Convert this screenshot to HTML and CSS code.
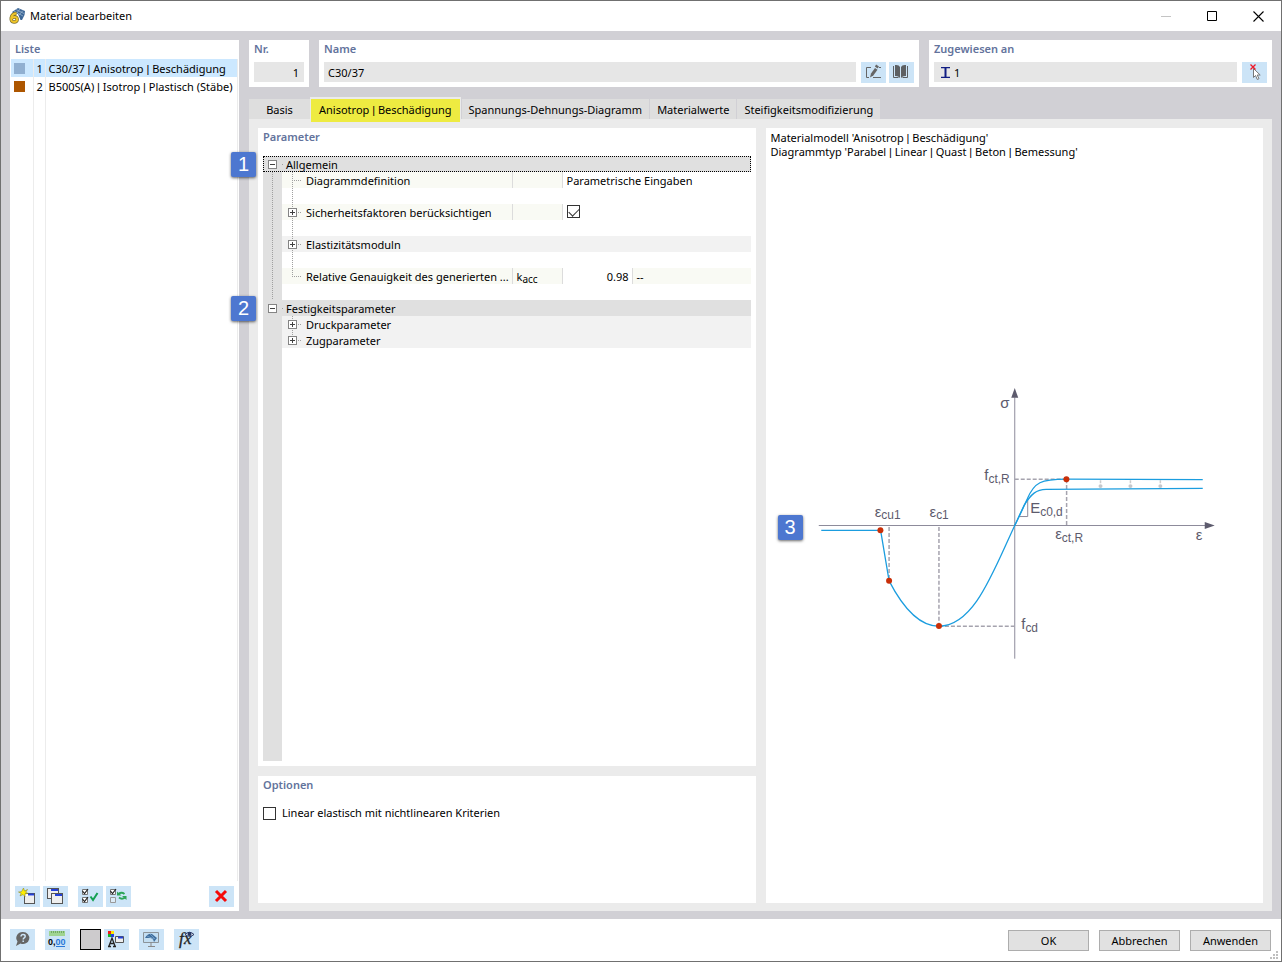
FILE: index.html
```html
<!DOCTYPE html>
<html lang="de">

<head>
    <meta charset="UTF-8">
    <meta name="viewport" content="width=device-width, initial-scale=1.0">
    <title>Material bearbeiten</title>
    <link rel="stylesheet" href="styles.css">
</head>

<body>
    <div class="window">
        <header class="titlebar">
            <svg class="logo" width="16" height="16" viewBox="0 0 16 16">
                <path d="M3 4 L9 0 L16 3 L15.500 7 L13 12 L11.500 12 L9 6 L5 6Z" fill="#3d6797" />
                <path d="M5 3l9 5M7 1.500l8 4M11 1l-4 5M14 2.500l-4 4.500" stroke="#a3bdd6" stroke-width=".7" />
                <path d="M7.500 5.500 Q3 5.500 2.200 10 Q1.800 14 5 14 Q8.200 14 8.200 11.300 Q8 8.800 5.200 9 Q3 9.300 2.500 11" fill="none" stroke="#7d702d" stroke-width="3.400" />
                <path d="M7.500 5.500 Q3 5.500 2.200 10 Q1.800 14 5 14 Q8.200 14 8.200 11.300 Q8 8.800 5.200 9 Q3 9.300 2.500 11" fill="none" stroke="#efc529" stroke-width="2" />
            </svg>
            <h1>Material bearbeiten</h1>
            <div class="window-controls">
                <button aria-label="Minimieren" disabled><svg width="10" height="10"><path d="M0 5.500h10" stroke="#c4c4c4" /></svg></button>
                <button aria-label="Maximieren"><svg width="10" height="10"><path d="M.5.5h9v9h-9z" fill="none" stroke="#000" /></svg></button>
                <button aria-label="Schließen"><svg width="11" height="11"><path d="M.5.500l10 10M10.500.500l-10 10" stroke="#000" stroke-width="1.100" /></svg></button>
            </div>
        </header>

        <main class="workspace">
            <aside class="panel list-panel">
                <h2>Liste</h2>
                <div class="list">
                    <table class="materials">
                        <tr class="selected">
                            <td><span class="swatch concrete"></span></td>
                            <td>1</td>
                            <td>C30/37 <span class="sep">|</span> Anisotrop <span class="sep">|</span> Beschädigung</td>
                        </tr>
                        <tr>
                            <td><span class="swatch steel"></span></td>
                            <td>2</td>
                            <td>B500S(A) <span class="sep">|</span> Isotrop <span class="sep">|</span> Plastisch (Stäbe)</td>
                        </tr>
                        <tr class="filler">
                            <td></td>
                            <td></td>
                            <td></td>
                        </tr>
                    </table>
                </div>
                <div class="toolbar list-tools">
                    <button class="icon-btn" aria-label="Neu">
                        <svg width="25" height="21" viewBox="0 0 25 21">
                            <rect x="9.500" y="7.500" width="10" height="10" fill="#eee" stroke="#555" />
                            <path d="M10 9h9" stroke="#fff" stroke-width="2" /><path d="M13 8.500h6" stroke="#2340d8" stroke-width="2" />
                            <path d="M8.500 2l1 3 3-1.500-1.800 2.700 2.300 1.300-3 .3 0 2.700-2-2-3 1.500 1.200-2.700-2.700-1.300 3-.3z" fill="#ffef00" stroke="#8f8b28" stroke-width=".6" />
                        </svg>
                    </button>
                    <button class="icon-btn" aria-label="Kopieren">
                        <svg width="25" height="21" viewBox="0 0 25 21">
                            <rect x="4.500" y="2.500" width="11" height="10" fill="#eee" stroke="#555" />
                            <path d="M8 4h7" stroke="#2340d8" stroke-width="2" />
                            <rect x="8.500" y="7.500" width="11" height="10" fill="#eee" stroke="#555" />
                            <path d="M12 9h7" stroke="#2340d8" stroke-width="2" />
                        </svg>
                    </button>
                    <button class="icon-btn group-start" aria-label="Alle auswählen">
                        <svg width="25" height="21" viewBox="0 0 25 21" fill="none">
                            <path d="M4.500 3.500h5v5h-5zM4.500 11.500h5v5h-5z" fill="#fff" stroke="#777" />
                            <path d="M4.500 5l2 2.500 3.500-4.500M4.500 13l2 2.500 3.500-4.500" stroke="#222" stroke-width="1.200" />
                            <path d="M12.500 10.500l2.500 3.500 4.500-7" stroke="#14a052" stroke-width="2" />
                        </svg>
                    </button>
                    <button class="icon-btn" aria-label="Auswahl umkehren">
                        <svg width="25" height="21" viewBox="0 0 25 21" fill="none">
                            <path d="M4.500 3.500h5v5h-5z" fill="#fff" stroke="#777" />
                            <path d="M4.500 11.500h5v5h-5z" fill="#dcebf6" stroke="#999" />
                            <path d="M4.500 5l2 2.500 3.500-4.500" stroke="#222" stroke-width="1.200" />
                            <path d="M12.500 8q3-2.500 6 0M19 11.500q-3 2.500-6 0" stroke="#2ca457" stroke-width="1.800" />
                            <path d="M11 5.500v4h4.500zM20.500 14v-4H16z" fill="#2ca457" />
                        </svg>
                    </button>
                    <button class="icon-btn push-right" aria-label="Löschen">
                        <svg width="25" height="21" viewBox="0 0 25 21">
                            <path d="M7 5l10 10M17 5l-10 10" stroke="#f50a0a" stroke-width="3" />
                        </svg>
                    </button>
                </div>
            </aside>

            <div class="editor">
                <div class="fields">
                    <div class="panel field-nr">
                        <label for="nr">Nr.</label>
                        <div class="field-row"><input id="nr" type="text" value="1" readonly></div>
                    </div>
                    <div class="panel field-name">
                        <label for="name">Name</label>
                        <div class="field-row">
                            <input id="name" type="text" value="C30/37" readonly>
                            <div class="toolbar">
                                <button class="icon-btn" aria-label="Name bearbeiten">
                                    <svg width="25" height="21" viewBox="0 0 25 21">
                                        <path d="M10 5.500H5.500v10H8M12 15.500h8M18 5.500h2" fill="none" stroke="#666" />
                                        <path d="M9 15.500l1-4 4-5.500 2.500 1.800-4.200 5.700z" fill="#666" /><path d="M14.500 3.500l2.800 2" stroke="#666" stroke-width="2.200" />
                                    </svg>
                                </button>
                                <button class="icon-btn" aria-label="Bibliothek">
                                    <svg width="25" height="21" viewBox="0 0 25 21">
                                        <path d="M6 3q4-.5 5 2v11q-2-2.500-5-2zM17 3q-4-.5-5 2v11q2-2.500 5-2z" fill="#5d6063" />
                                        <path d="M4.500 4v11.500h5M18.500 4v11.500h-5" fill="none" stroke="#5d6063" />
                                    </svg>
                                </button>
                            </div>
                        </div>
                    </div>
                    <div class="panel field-assigned">
                        <label for="assigned">Zugewiesen an</label>
                        <div class="field-row">
                            <div class="input-wrap">
                                <svg width="9" height="11" viewBox="0 0 9 11"><path d="M0 .5h9M0 10.500h9" stroke="#111d83" stroke-width="1.400" /><path d="M4.500 0v11" stroke="#111d83" stroke-width="2" /></svg>
                                <input id="assigned" type="text" value="1" readonly>
                            </div>
                            <button class="icon-btn" aria-label="Auswahl aufheben">
                                <svg width="25" height="21" viewBox="0 0 25 21">
                                    <path d="M11.500 6.500v9l2-2 1.800 4 1.700-.8-1.800-3.700h3z" fill="#fff" stroke="#777" />
                                    <path d="M8.500 2.500l5 5M13.500 2.500l-5 5" stroke="#f01828" stroke-width="1.300" />
                                </svg>
                            </button>
                        </div>
                    </div>
                </div>

                <nav class="tabs">
                    <button class="tab first">Basis</button>
                    <button class="tab active"><span class="tab-label">Anisotrop <span class="sep">|</span> Beschädigung</span></button>
                    <button class="tab">Spannungs-Dehnungs-Diagramm</button>
                    <button class="tab">Materialwerte</button>
                    <button class="tab">Steifigkeitsmodifizierung</button>
                </nav>

                <div class="tab-page">
                    <section class="panel parameters">
                        <h2>Parameter</h2>
                        <div class="tree">
                            <table class="params">
                                <colgroup>
                                    <col class="col-gutter">
                                    <col class="col-branch">
                                    <col class="col-name">
                                    <col class="col-symbol">
                                    <col class="col-value">
                                    <col class="col-unit">
                                </colgroup>
                                <tr class="group focused">
                                    <td class="gutter"><button class="toggle minus" aria-label="Allgemein"></button><span class="marker">1</span></td>
                                    <td colspan="5">Allgemein</td>
                                </tr>
                                <tr class="item">
                                    <td class="gutter line"></td>
                                    <td class="branch leaf"></td>
                                    <td>Diagrammdefinition</td>
                                    <td></td>
                                    <td class="value" colspan="2">Parametrische Eingaben</td>
                                </tr>
                                <tr>
                                    <td class="gutter line"></td>
                                    <td class="branch"></td>
                                    <td colspan="4"></td>
                                </tr>
                                <tr class="item">
                                    <td class="gutter line"></td>
                                    <td class="branch leaf"><button class="toggle plus" aria-label="Sicherheitsfaktoren"></button></td>
                                    <td><label for="safety">Sicherheitsfaktoren berücksichtigen</label></td>
                                    <td></td>
                                    <td class="value check" colspan="2"><input id="safety" type="checkbox" checked></td>
                                </tr>
                                <tr>
                                    <td class="gutter line"></td>
                                    <td class="branch"></td>
                                    <td colspan="4"></td>
                                </tr>
                                <tr class="subgroup">
                                    <td class="gutter line"></td>
                                    <td class="branch leaf"><button class="toggle plus" aria-label="Elastizitätsmoduln"></button></td>
                                    <td colspan="4">Elastizitätsmoduln</td>
                                </tr>
                                <tr>
                                    <td class="gutter line"></td>
                                    <td class="branch"></td>
                                    <td colspan="4"></td>
                                </tr>
                                <tr class="item">
                                    <td class="gutter line"></td>
                                    <td class="branch leaf last"></td>
                                    <td>Relative Genauigkeit des generierten ...</td>
                                    <td>k<sub>acc</sub></td>
                                    <td class="value number">0.98</td>
                                    <td>--</td>
                                </tr>
                                <tr>
                                    <td class="gutter line"></td>
                                    <td colspan="5"></td>
                                </tr>
                                <tr class="group">
                                    <td class="gutter"><button class="toggle minus" aria-label="Festigkeitsparameter"></button><span class="marker">2</span></td>
                                    <td colspan="5">Festigkeitsparameter</td>
                                </tr>
                                <tr class="subgroup">
                                    <td class="gutter"></td>
                                    <td class="branch leaf"><button class="toggle plus" aria-label="Druckparameter"></button></td>
                                    <td colspan="4">Druckparameter</td>
                                </tr>
                                <tr class="subgroup">
                                    <td class="gutter"></td>
                                    <td class="branch leaf last"><button class="toggle plus" aria-label="Zugparameter"></button></td>
                                    <td colspan="4">Zugparameter</td>
                                </tr>
                            </table>
                        </div>
                    </section>

                    <section class="panel options">
                        <h2>Optionen</h2>
                        <label class="option"><input type="checkbox"> Linear elastisch mit nichtlinearen Kriterien</label>
                    </section>

                    <section class="panel preview">
                        <p>Materialmodell 'Anisotrop <span class="sep">|</span> Beschädigung'<br>Diagrammtyp 'Parabel <span class="sep">|</span> Linear <span class="sep">|</span> Quast <span class="sep">|</span> Beton <span class="sep">|</span> Bemessung'</p>
                        <div class="diagram">
                            <span class="marker">3</span>
                            <svg viewBox="766 157 497 746">
                                <!-- axes -->
                                <g stroke="#8d8b9b" fill="none">
                                    <path d="M818 524.500h388M1014.500 658V396" />
                                    <path d="M1019 515.500h8.500v-18" />
                                </g>
                                <path d="M1014.500 386.500l3.500 10h-7zM1215 524.500l-10-3.500v7z" fill="#5d5b6d" />
                                <!-- helper lines -->
                                <g stroke="#a5a3ae" fill="none" stroke-width="1.500" stroke-dasharray="4 2">
                                    <path d="M888.500 526v53M938.500 526v99M938.500 625.500h76M1014.500 478h52M1066.500 478v46" />
                                </g>
                                <g stroke="#ccc" stroke-width="1.500" stroke-dasharray="3 2">
                                    <path d="M1100.500 479v7M1130.500 479v7M1160.500 479v7" />
                                </g>
                                <g fill="#c6c8cc">
                                    <circle cx="1100.500" cy="485" r="2" />
                                    <circle cx="1130.500" cy="485" r="2" />
                                    <circle cx="1160.500" cy="485" r="2" />
                                </g>
                                <!-- curves -->
                                <g stroke="#1b9ddf" fill="none" stroke-width="1.300">
                                    <path d="M820.500 529.300H880L888.500 580Q912 625.500 938.500 625.500C974 625.500 993 570 1014.500 524.500C1021 511 1023 507 1027 498C1034 481 1041 478 1066 478L1203 478.500" />
                                    <path d="M1014.500 524.500L1024 504C1031 493 1036 488.300 1046 488.300L1203 487.300" />
                                </g>
                                <g fill="#c92f08">
                                    <circle cx="879.800" cy="529.300" r="3" />
                                    <circle cx="888.500" cy="579.800" r="3" />
                                    <circle cx="938.500" cy="625.300" r="3" />
                                    <circle cx="1066.300" cy="478" r="3" />
                                </g>
                                <g class="labels">
                                    <text x="1000" y="407">σ</text>
                                    <text x="984" y="479">f<tspan class="idx" dy="3">ct,R</tspan></text>
                                    <text x="1030" y="512">E<tspan class="idx" dy="3">c0,d</tspan></text>
                                    <text x="1055" y="538">ε<tspan class="idx" dy="3">ct,R</tspan></text>
                                    <text x="1196" y="539">ε</text>
                                    <text x="874" y="516">ε<tspan class="idx" dy="2">cu1</tspan></text>
                                    <text x="929" y="516">ε<tspan class="idx" dy="2">c1</tspan></text>
                                    <text x="1021" y="628">f<tspan class="idx" dy="3">cd</tspan></text>
                                </g>
                            </svg>
                        </div>
                    </section>
                </div>
            </div>
        </main>

        <footer class="footer">
            <div class="toolbar footer-tools">
                <button class="icon-btn" aria-label="Hilfe">
                    <svg width="25" height="21" viewBox="0 0 25 21">
                        <path d="M13 3a6.300 6 0 1 1-2.500 11.500L6 17l1.500-4.500A6.300 6 0 0 1 13 3z" fill="#666" />
                        <path d="M11 7.500q.2-2 2-2 2.200 0 2.200 1.700 0 1-1 1.600-1 .6-1 1.700M13.200 11.500v1.500" fill="none" stroke="#cce4f7" stroke-width="1.500" />
                    </svg>
                </button>
                <button class="icon-btn" aria-label="Einheiten">
                    <svg width="25" height="21" viewBox="0 0 25 21">
                        <path d="M4 2h16v5H4z" fill="#9fd492" /><path d="M6.500 2v2M8.500 2v2M10.500 2v2M12.500 2v2M14.500 2v2M16.500 2v2M18.500 2v2" stroke="#72aa65" />
                        <text class="units" x="3" y="16">0,<tspan fill="#2878d8">00</tspan></text>
                        <path d="M11 17.500h9" stroke="#2878d8" />
                    </svg>
                </button>
                <button class="color-btn" aria-label="Farbe"></button>
                <button class="icon-btn tight" aria-label="Darstellung">
                    <svg width="25" height="21" viewBox="0 0 25 21">
                        <path d="M4 2h3v3H4z" fill="#f01818" /><path d="M7 2h3v3H7z" fill="#ffe800" />
                        <path d="M4 5h3v3H4z" fill="#12b42a" /><path d="M7 5h3v3H7z" fill="#2440e4" />
                        <path d="M4 17.500h3M9 17.500h3M5 17l3-8 3 8M6 14.500h4" fill="none" stroke="#222" stroke-width="1.300" />
                        <path d="M11.500 7.500h8v6h-8z" fill="#eee" stroke="#555" /><path d="M14 8.500h5" stroke="#2340d8" stroke-width="2" />
                    </svg>
                </button>
                <button class="icon-btn" aria-label="Anzeige">
                    <svg width="25" height="21" viewBox="0 0 25 21">
                        <path d="M4.500 3.500h15v10h-15z" fill="#c3def2" stroke="#8b9399" />
                        <path d="M12 13v4M9 17.500h7" stroke="#888" />
                        <path d="M6 9q3-5 7-4l5 4-3 4q-1-4-4-4z" fill="#3f6f9f" />
                        <path d="M8 7l7 3M11 5l5 5" stroke="#87add0" stroke-width=".7" />
                    </svg>
                </button>
                <button class="icon-btn" aria-label="Formel">
                    <svg width="25" height="21" viewBox="0 0 25 21">
                        <text class="formula" x="5" y="15">f<tspan x="10">x</tspan></text>
                        <path d="M11 5.500q4.500-4.500 9 0-4.500 3.500-9 0z" fill="#e0e7f3" stroke="#273763" /><circle cx="15.500" cy="5" r="2" fill="#273763" />
                    </svg>
                </button>
            </div>
            <div class="actions">
                <button>OK</button>
                <button>Abbrechen</button>
                <button>Anwenden</button>
            </div>
            <svg class="grip" width="8" height="8" viewBox="0 0 8 8"><path d="M6 0h2v2H6zM3 3h2v2H3zM6 3h2v2H6zM0 6h2v2H0zM3 6h2v2H3zM6 6h2v2H6z" fill="#bfbfbf" /></svg>
        </footer>
    </div>
</body>

</html>
```
FILE: styles.css
```css
* {
    box-sizing: border-box;
}

body,
html {
    margin: 0;
    height: 100%;
}

body,
button,
input {
    font-family: 'Noto Sans', 'Open Sans', sans-serif;
    font-size: 11px;
    line-height: 16px;
    color: #000;
}

button {
    padding: 0;
    border: 0;
    background: none;
}

h1,
h2,
p {
    margin: 0;
    font-weight: normal;
}

svg {
    display: block;
}

/* narrow bar between parts of a name */
.sep {
    font-family: 'Liberation Sans', sans-serif;
}

.window {
    display: flex;
    flex-direction: column;
    height: 100%;
    border: 1px solid #707070;
    background-color: white;
}

/* title bar */
.titlebar {
    display: flex;
    align-items: center;
    height: 30px;
    padding-left: 8px;
}

.titlebar h1 {
    margin-left: 5px;
    font-size: 11px;
}

.window-controls {
    display: flex;
    margin-left: auto;
}

.window-controls button {
    display: flex;
    align-items: center;
    justify-content: center;
    width: 46px;
    height: 30px;
}

/* panels */
.workspace {
    display: flex;
    flex: 1;
    gap: 10px;
    min-height: 0;
    padding: 9px 9px 8px;
    background-color: #d1d0d5;
}

.panel {
    display: flex;
    flex-direction: column;
    padding: 0 5px;
    background-color: white;
}

.panel h2,
.fields label {
    font-size: 11px;
    font-weight: 600;
    line-height: 18px;
    color: #63739c;
}

.icon-btn {
    flex: none;
    width: 25px;
    height: 21px;
    background-color: #cce4f7;
}

.icon-btn:hover {
    background-color: #b4d8f5;
}

.toolbar {
    display: flex;
    gap: 3px;
}

/* material list */
.list-panel {
    width: 229px;
    padding: 0 1px;
}

.list-panel h2 {
    margin-bottom: 1px;
    padding-left: 4px;
}

.list {
    flex: 1;
}

.materials {
    width: 100%;
    height: 100%;
    border-collapse: collapse;
    table-layout: fixed;
}

.materials tr {
    height: 18px;
}

.materials tr.filler {
    height: auto;
}

.materials td {
    padding: 2px 0 0 3px;
    border-right: 1px solid #ececec;
    white-space: nowrap;
}

.materials td:first-child {
    width: 22px;
    padding-top: 0;
}

.materials td:nth-child(2) {
    width: 12px;
}

.materials .selected {
    background-color: #cce8ff;
}

.swatch {
    display: block;
    width: 11px;
    height: 11px;
}

.concrete {
    background-color: #91b0d1;
}

.steel {
    background-color: #ad5600;
}

.list-tools {
    padding: 5px 4px 4px;
}

.group-start {
    margin-left: 7px;
}

.push-right {
    margin-left: auto;
}

/* header fields */
.editor {
    display: flex;
    flex: 1;
    flex-direction: column;
    min-width: 0;
}

.fields {
    display: flex;
    gap: 10px;
}

.fields .panel {
    height: 47px;
}

.fields label {
    height: 22px;
}

.field-nr {
    width: 60px;
}

.field-name {
    flex: 590;
}

.field-assigned {
    flex: 333;
}

.field-row {
    display: flex;
    gap: 5px;
}

.field-row input {
    flex: 1;
    min-width: 0;
    height: 20px;
    padding: 1px 5px 0 4px;
    border: 0;
    background-color: #e6e6e6;
}

.field-nr input {
    text-align: right;
}

.input-wrap {
    display: flex;
    flex: 1;
    align-items: center;
    height: 20px;
    padding-left: 7px;
    background-color: #e6e6e6;
}

/* tabs */
.tabs {
    display: flex;
    align-items: flex-end;
    margin-top: 10px;
}

.tab {
    height: 20px;
    margin-right: 1px;
    padding: 1px 7px 0;
    background-color: #dedede;
}

.tab.first {
    width: 61px;
    margin-right: 0;
}

.tab.active {
    z-index: 1;
    height: 22px;
    padding: 2px 1px 0;
    background-color: #ebebeb;
}

.tab-label {
    display: block;
    height: 23px;
    padding: 3px 8px;
    background-color: #eeeb41;
}

.tab-page {
    display: grid;
    flex: 1;
    grid-template-columns: 1fr 1fr;
    grid-template-rows: 1fr 127px;
    gap: 10px;
    min-height: 0;
    padding: 9px 9px 8px;
    background-color: #ebebeb;
}

/* parameter tree */
.parameters {
    padding-bottom: 5px;
}

.parameters h2 {
    margin-bottom: 10px;
}

.tree {
    flex: 1;
    background: linear-gradient(#e0e0e0, #e0e0e0) no-repeat 0 1px / 19px 100%;
}

.params {
    width: 100%;
    border-collapse: collapse;
    table-layout: fixed;
}

.col-gutter {
    width: 19px;
}

.col-branch {
    width: 20px;
}

.col-name {
    width: 210px;
}

.col-symbol {
    width: 50px;
}

.col-value {
    width: 70px;
}

.params tr {
    height: 16px;
}

.params td {
    height: 16px;
    padding: 2px 4px 0;
    line-height: 14px;
    white-space: nowrap;
}

.params .group {
    position: relative;
}

.params .group td {
    background-color: #e0e0e0;
}

.params .focused {
    outline: 1px dotted #000;
    outline-offset: -1px;
}

.params .subgroup td {
    background-color: #f2f2f2;
}

.params .item td {
    border-right: 1px solid #dcdcdc;
    background-color: #f9faf4;
}

.params .item td:last-child {
    border-right: 0;
}

.params .item .value {
    background-color: white;
}

.params .item .check {
    padding-top: 0;
    vertical-align: top;
}

.params .number {
    padding-right: 3px;
    text-align: right;
}

.params sub {
    font-size: 10px;
    line-height: 0;
    vertical-align: -2px;
}

.params tr .gutter {
    padding: 0 5px;
    border: 0;
    background-color: #e0e0e0;
}

/* dotted connectors */
.params tr .gutter.line {
    background-image: repeating-linear-gradient(#a0a0a0 0 1px, transparent 1px 2px);
    background-repeat: no-repeat;
    background-position: 9px 0;
    background-size: 1px 100%;
}

.params tr .branch {
    padding: 0 6px;
    border: 0;
    background-image: repeating-linear-gradient(#a0a0a0 0 1px, transparent 1px 2px);
    background-repeat: no-repeat;
    background-position: 10px 0;
    background-size: 1px 100%;
}

.params tr .branch.leaf {
    background-image: repeating-linear-gradient(#a0a0a0 0 1px, transparent 1px 2px), repeating-linear-gradient(90deg, #a0a0a0 0 1px, transparent 1px 2px);
    background-position: 10px 0, 10px 8px;
    background-size: 1px 100%, 10px 1px;
}

.params tr .branch.last {
    background-size: 1px 9px, 10px 1px;
}

.params .group td + td {
    background-image: repeating-linear-gradient(90deg, #a0a0a0 0 1px, transparent 1px 2px);
    background-repeat: no-repeat;
    background-position: 0 8px;
    background-size: 2px 1px;
}

.toggle {
    display: block;
    width: 9px;
    height: 9px;
    border: 1px solid #848484;
    background: linear-gradient(#404040, #404040) no-repeat center / 5px 1px, white;
}

.toggle.plus {
    background: linear-gradient(#404040, #404040) no-repeat center / 5px 1px, linear-gradient(#404040, #404040) no-repeat center / 1px 5px, white;
}

/* numbered markers lie over the dialog */
.marker {
    position: absolute;
    z-index: 2;
    width: 25px;
    height: 25px;
    border-radius: 2px;
    background-color: #4d77d0;
    box-shadow: 0 1px 3px rgba(0, 0, 0, 0.6);
    font-family: 'Liberation Sans', sans-serif;
    font-size: 20px;
    line-height: 25px;
    text-align: center;
    color: white;
}

.gutter .marker {
    top: -4px;
    left: -32px;
}

.diagram .marker {
    top: 356px;
    left: 12px;
}

/* check boxes */
input[type="checkbox"] {
    display: block;
    flex: none;
    appearance: none;
    width: 13px;
    height: 13px;
    margin: 0;
    border: 1px solid #333;
    background-color: white;
}

.check input[type="checkbox"] {
    margin-top: 1px;
}

input[type="checkbox"]:checked::before {
    content: '';
    display: block;
    width: 9px;
    height: 5px;
    margin: 2px 1px;
    border-bottom: 1px solid #333;
    border-left: 1px solid #333;
    transform: rotate(-45deg);
}

.option {
    display: flex;
    align-items: center;
    gap: 6px;
    margin-top: 11px;
}

/* preview */
.preview {
    grid-row: 1 / 3;
    grid-column: 2;
    min-height: 0;
    padding: 3px 0 0;
}

.preview p {
    padding: 0 5px;
    line-height: 13px;
}

.diagram {
    position: relative;
    flex: 1;
    min-height: 0;
}

.diagram svg {
    width: 100%;
    height: 100%;
}

.labels {
    font-family: 'Liberation Sans', sans-serif;
    font-size: 15px;
    fill: #5d5b6d;
}

.idx {
    font-size: 12px;
}

/* footer */
.footer {
    position: relative;
    display: flex;
    align-items: flex-start;
    justify-content: space-between;
    height: 42px;
    padding: 10px 10px 0 9px;
}

.footer-tools {
    gap: 10px;
}

.color-btn {
    width: 21px;
    height: 21px;
    border: 1px solid #000;
    background-color: #cdcbcd;
}

.tight {
    margin-left: -7px;
}

.units {
    font-family: 'Liberation Sans', sans-serif;
    font-size: 9px;
    font-weight: bold;
}

.formula {
    font-family: 'Liberation Serif', serif;
    font-size: 17px;
    font-style: italic;
    fill: #222;
    stroke: #222;
    stroke-width: 0.3;
}

.actions {
    display: flex;
    gap: 10px;
    padding-top: 1px;
}

.actions button {
    width: 81px;
    height: 21px;
    border: 1px solid #adadad;
    background-color: #e1e1e1;
}

.actions button:hover {
    border-color: #0078d7;
    background-color: #e5f1fb;
}

.grip {
    position: absolute;
    right: 3px;
    bottom: 2px;
}
```
